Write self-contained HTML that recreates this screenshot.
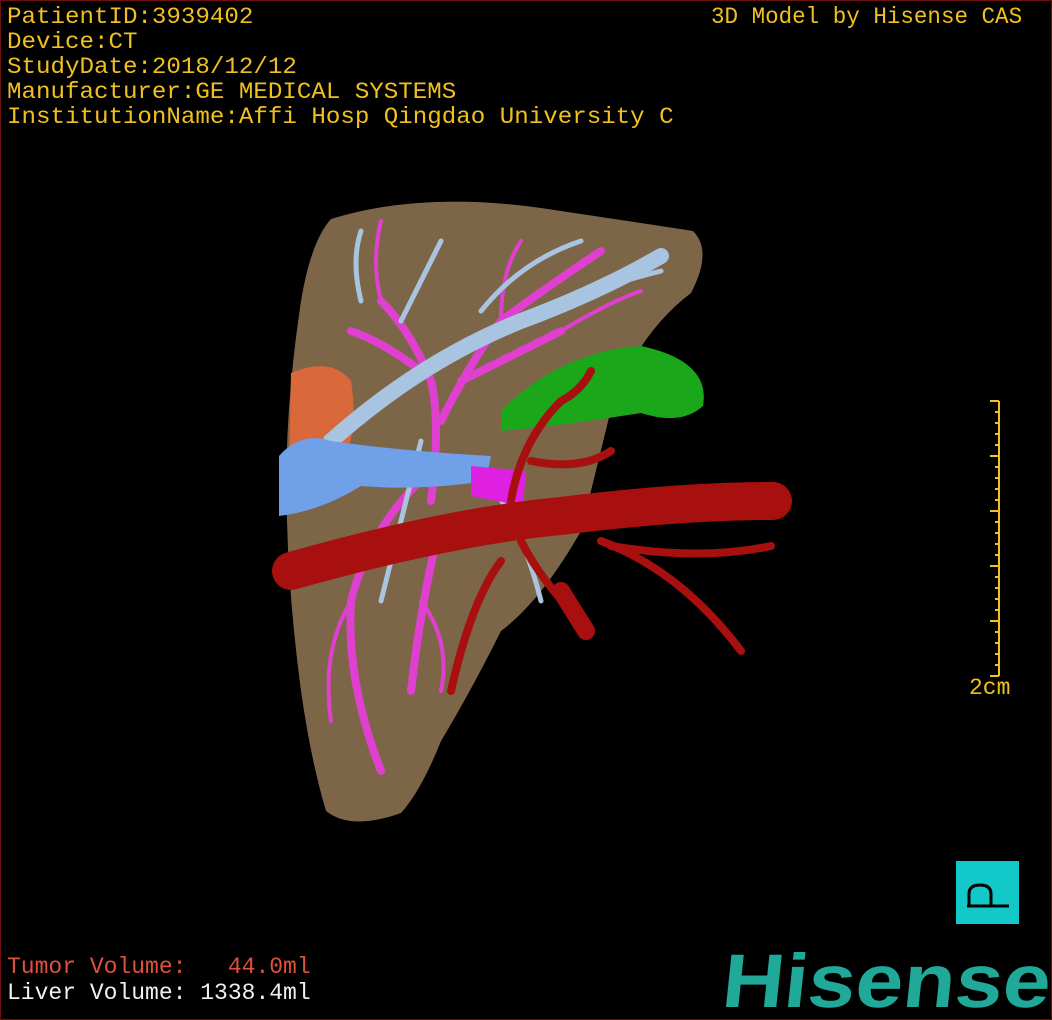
<!DOCTYPE html>
<html><head><style>
html,body{margin:0;padding:0;background:#000;}
#w{position:relative;width:1050px;height:1018px;border:1px solid #6a1010;background:#000;overflow:hidden;}
.t{position:absolute;font-family:"Liberation Mono","Noto Sans CJK SC",monospace;font-size:23px;line-height:25px;color:#f0c020;transform:scaleX(1.05);transform-origin:left top;white-space:nowrap;}
</style></head><body><div id="w">
<div class="t" style="left:6px;top:4px">PatientID:3939402<br>Device:CT<br>StudyDate:2018/12/12<br>Manufacturer:GE MEDICAL SYSTEMS<br>InstitutionName:Affi Hosp Qingdao University C</div>
<div class="t" style="left:710px;top:4px;transform:scaleX(0.98)">3D Model by Hisense CAS</div>
<div class="t" style="left:6px;top:954px;color:#e0503a;transform:scaleX(1.0)">Tumor Volume: &nbsp;&nbsp;44.0ml</div>
<div class="t" style="left:6px;top:980px;color:#f0f0f0;transform:scaleX(1.0)">Liver Volume: 1338.4ml</div>
<div class="t" style="left:968px;top:675px;transform:scaleX(1.0)">2cm</div>
<svg width="1050" height="1018" style="position:absolute;left:0;top:0">
<path d="M330,218 Q420,190 540,207 Q640,222 692,230 Q712,250 690,292 Q640,330 612,400 Q595,470 580,530 Q540,600 500,630 Q470,690 440,740 Q420,790 400,812 Q350,830 325,810 Q310,760 300,690 Q288,600 286,520 Q282,420 300,300 Q310,240 330,218Z" fill="#7d6548"/>
<path d="M290,372 Q330,355 350,380 Q360,440 330,490 Q300,500 288,470Z" fill="#d9683a"/>
<path d="M500,410 Q560,350 640,345 Q710,360 702,405 Q680,425 640,412 Q560,425 500,430Z" fill="#1aa81a"/>
<g stroke="#e040d0" fill="none" stroke-linecap="round">
<path d="M430,500 Q440,420 430,380 Q410,330 380,300 M440,420 Q470,360 500,320 Q540,290 600,250 M420,370 Q380,340 350,330 M460,380 Q520,350 560,330 M440,460 Q370,520 350,600 Q345,680 380,770 M440,520 Q420,600 410,690" stroke-width="8"/>
<path d="M380,300 Q370,260 380,220 M500,320 Q500,270 520,240 M560,330 Q610,300 640,290 M350,600 Q320,650 330,720 M420,600 Q450,640 440,690" stroke-width="4"/>
</g>
<g stroke="#a8c4e0" fill="none" stroke-linecap="round">
<path d="M330,440 Q420,360 520,320 Q600,290 660,255" stroke-width="16"/>
<path d="M400,320 Q420,280 440,240 M480,310 Q520,260 580,240 M560,300 Q620,280 660,270 M360,300 Q350,260 360,230 M420,440 Q400,520 380,600 M480,470 Q520,520 540,600" stroke-width="5"/>
</g>
<path d="M278,455 Q300,430 330,440 Q400,450 490,455 L485,480 Q420,490 360,485 Q320,510 278,515Z" fill="#6fa0e8"/>
<path d="M470,465 L525,470 L522,505 L470,495Z" fill="#e020e0"/>
<g stroke="#a81010" fill="none" stroke-linecap="round">
<path d="M290,570 Q450,525 560,515 Q680,500 772,500" stroke-width="38"/>
<path d="M520,540 Q540,580 580,620 M500,560 Q470,600 450,690 M600,540 Q680,570 740,650 M610,545 Q700,560 770,545 M510,500 Q520,440 560,400 M530,460 Q580,470 610,450 M560,400 Q580,390 590,370" stroke-width="8"/>
<path d="M560,590 L585,630" stroke-width="18"/>
</g>
<rect x="955" y="860" width="63" height="63" fill="#12c8c8"/>
<path d="M968,905 L968,893 Q968,884 979,884 Q990,884 990,893 L990,905 M966,905 L1008,905" stroke="#000" stroke-width="3" fill="none"/>
<g stroke="#f0c020" stroke-width="2">
<line x1="998" y1="400" x2="998" y2="675"/>
<line x1="989" y1="400" x2="998" y2="400"/><line x1="989" y1="455" x2="998" y2="455"/><line x1="989" y1="510" x2="998" y2="510"/><line x1="989" y1="565" x2="998" y2="565"/><line x1="989" y1="620" x2="998" y2="620"/><line x1="989" y1="675" x2="998" y2="675"/>
<path d="M994,411h4M994,422h4M994,433h4M994,444h4M994,466h4M994,477h4M994,488h4M994,499h4M994,521h4M994,532h4M994,543h4M994,554h4M994,576h4M994,587h4M994,598h4M994,609h4M994,631h4M994,642h4M994,653h4M994,664h4"/>
</g>
<text x="720" y="1006" font-family="Liberation Sans,sans-serif" font-weight="bold" font-size="76" fill="#20a898" textLength="328" lengthAdjust="spacingAndGlyphs" transform="skewX(-6) translate(105,0)">Hisense</text>
</svg>
</div></body></html>
